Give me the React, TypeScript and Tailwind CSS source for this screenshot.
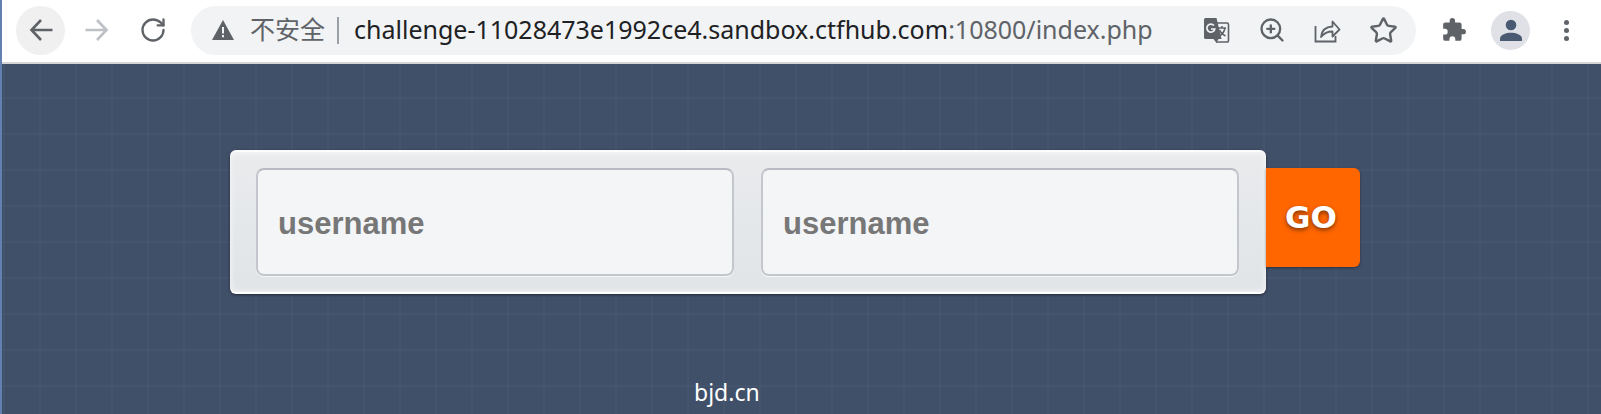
import React from 'react';
import { RotateCw, Star, ZoomIn } from 'lucide-react';

const NavArrow = ({ flip, color }: { flip?: boolean; color: string }) => (
  <svg width="24" height="24" viewBox="0 0 24 24" fill="none" stroke={color} strokeWidth="2.600" className={flip ? '-scale-x-100' : ''}>
    <path d="M23.500 12H2.500M12 2L2.500 12 12 22" />
  </svg>
);

const TranslateIcon = () => (
  <svg width="27" height="27" viewBox="0 0 27 27" fill="none">
    <path d="M10 6h14a1.500 1.500 0 0 1 1.500 1.500v16a1.500 1.500 0 0 1-1.500 1.500H13" stroke="#5f6368" strokeWidth="1.600" />
    <path d="M2.500 1h11l5 21h-3l-2 4-3-4H2.500a1.500 1.500 0 0 1-1.500-1.500V2.500A1.500 1.500 0 0 1 2.500 1z" fill="#5f6368" />
    <path d="M11 8.500A4 4 0 1 0 11.800 12H8" stroke="#f1f3f4" strokeWidth="1.700" />
    <path d="M15 11h8M19 9v2M22 11c-.8 4-3.500 7-6 8M16.500 13c1 2.500 3 4.500 6 6" stroke="#5f6368" strokeWidth="1.500" />
  </svg>
);

const ShareIcon = () => (
  <svg width="27" height="27" viewBox="0 0 27 27" fill="none" stroke="#5f6368" strokeWidth="1.800">
    <path d="M1.500 9v15.500h20V19" />
    <path d="M7 20c.5-6 4.500-10 11.500-10.500V4.500l7 8-7 7v-5c-5 0-8.500 1.500-11.500 5.500z" strokeLinejoin="round" />
  </svg>
);

const PuzzleIcon = () => (
  <svg width="26" height="26" viewBox="0 0 24 24" fill="#5f6368">
    <path d="M20.500 11H19V7a2 2 0 0 0-2-2h-4V3.500a2.500 2.500 0 0 0-5 0V5H4a2 2 0 0 0-2 2v3.800h1.500a2.700 2.700 0 0 1 0 5.400H2V20a2 2 0 0 0 2 2h3.800v-1.500a2.700 2.700 0 0 1 5.400 0V22H17a2 2 0 0 0 2-2v-4h1.500a2.500 2.500 0 0 0 0-5z" />
  </svg>
);

const UserIcon = () => (
  <svg width="24" height="24" viewBox="0 0 24 24" fill="#4a5a72">
    <circle cx="12" cy="7" r="5.300" />
    <path d="M1 23v-2.500C1 16.500 7.500 14.700 12 14.700s11 1.800 11 5.800V23z" />
  </svg>
);

const WarningIcon = () => (
  <svg width="22" height="20" viewBox="0 0 22 20">
    <path d="M11 0l11 20H0z" fill="#5f6368" />
    <path d="M10 7h2v6.500h-2zM10 15h2v2.200h-2z" fill="#f1f3f4" />
  </svg>
);

const Toolbar = () => (
  <header className="h-[64px] shrink-0 flex items-center bg-white border-b-2 border-[#d4d5d6] pb-[2px] pl-[14px]">
    <div className="w-[49px] h-[49px] rounded-full bg-[#f0f0f0] flex items-center justify-center">
      <NavArrow color="#5f6368" />
    </div>
    <div className="w-[29px] ml-[17px] flex justify-center">
      <NavArrow flip color="#bdc0c4" />
    </div>
    <div className="w-[28px] ml-[28px] flex justify-center text-[#5f6368]">
      <RotateCw size={32} strokeWidth={2} />
    </div>
    <div className="w-[1225px] h-[49px] ml-[24px] rounded-full bg-[#f1f3f4] flex items-center pl-[21px] font-['Noto_Sans','Noto_Sans_CJK_SC',sans-serif] text-[25px]">
      <WarningIcon />
      <span className="ml-[16px] text-[#5f6368]">不安全</span>
      <span className="ml-[12px] w-[2px] h-[27px] bg-[#9aa0a6]" />
      <span className="ml-[15px] text-[#202124] whitespace-nowrap">
        challenge-11028473e1992ce4.sandbox.ctfhub.com<span className="text-[#5f6368]">:10800/index.php</span>
      </span>
      <div className="ml-auto flex items-center gap-[28px] pr-[18px]">
        <TranslateIcon />
        <ZoomIn size={28} strokeWidth={2} className="text-[#5f6368]" />
        <ShareIcon />
        <Star size={29} strokeWidth={2} className="text-[#5f6368]" />
      </div>
    </div>
    <div className="ml-[25px]"><PuzzleIcon /></div>
    <div className="ml-[24px] w-[39px] h-[39px] rounded-full bg-[#dfe1e6] flex items-center justify-center">
      <UserIcon />
    </div>
    <div className="ml-[34px] flex flex-col gap-[3px]">
      <span className="w-[5px] h-[5px] rounded-full bg-[#5f6368]" />
      <span className="w-[5px] h-[5px] rounded-full bg-[#5f6368]" />
      <span className="w-[5px] h-[5px] rounded-full bg-[#5f6368]" />
    </div>
  </header>
);

const Field = () => (
  <input
    placeholder="username"
    className="w-[478px] h-[108px] rounded-[8px] bg-[#f4f5f7] border-2 border-[#c4c6cd] border-t-[#b9bbc3] pl-[20px] pt-[3px] font-['Liberation_Sans',sans-serif] font-bold text-[31px] placeholder:text-[#777777] outline-none shadow-[0_1px_1px_rgba(255,255,255,0.7)]"
  />
);

export default function App() {
  return (
    <div className="w-[1601px] h-[414px] overflow-hidden flex">
      <div className="w-[2px] shrink-0 bg-[#6480b0]" />
      <div className="flex-1 flex flex-col">
        <Toolbar />
        <main className="flex-1 bg-[#415069] bg-[linear-gradient(to_right,rgba(255,255,255,0.025)_2px,transparent_2px),linear-gradient(to_bottom,rgba(255,255,255,0.025)_2px,transparent_2px)] bg-[size:36px_36px] bg-[position:1px_-3px] pl-[228px] pt-[86px]">
          <div className="flex items-start">
            <div className="w-[1036px] h-[144px] rounded-[6px] bg-gradient-to-b from-[#e9ebed] to-[#e1e4e7] border-t-2 border-b-2 border-white/90 shadow-[0_1px_3px_rgba(0,0,0,0.5),inset_0_0_6px_rgba(255,255,255,0.8)] flex items-center gap-[27px] pl-[26px]">
              <Field />
              <Field />
            </div>
            <button className="mt-[18px] w-[94px] h-[99px] pr-[4px] rounded-r-[6px] bg-[#ff6600] text-white font-['DejaVu_Sans',sans-serif] font-bold text-[31px] [text-shadow:0_2px_4px_rgba(90,40,0,0.8)] shadow-[0_1px_3px_rgba(0,0,0,0.4)]">
              GO
            </button>
          </div>
          <p className="mt-[84px] ml-[464px] text-white text-[23px] leading-[28px] font-['Noto_Sans',sans-serif]">bjd.cn</p>
        </main>
      </div>
    </div>
  );
}
